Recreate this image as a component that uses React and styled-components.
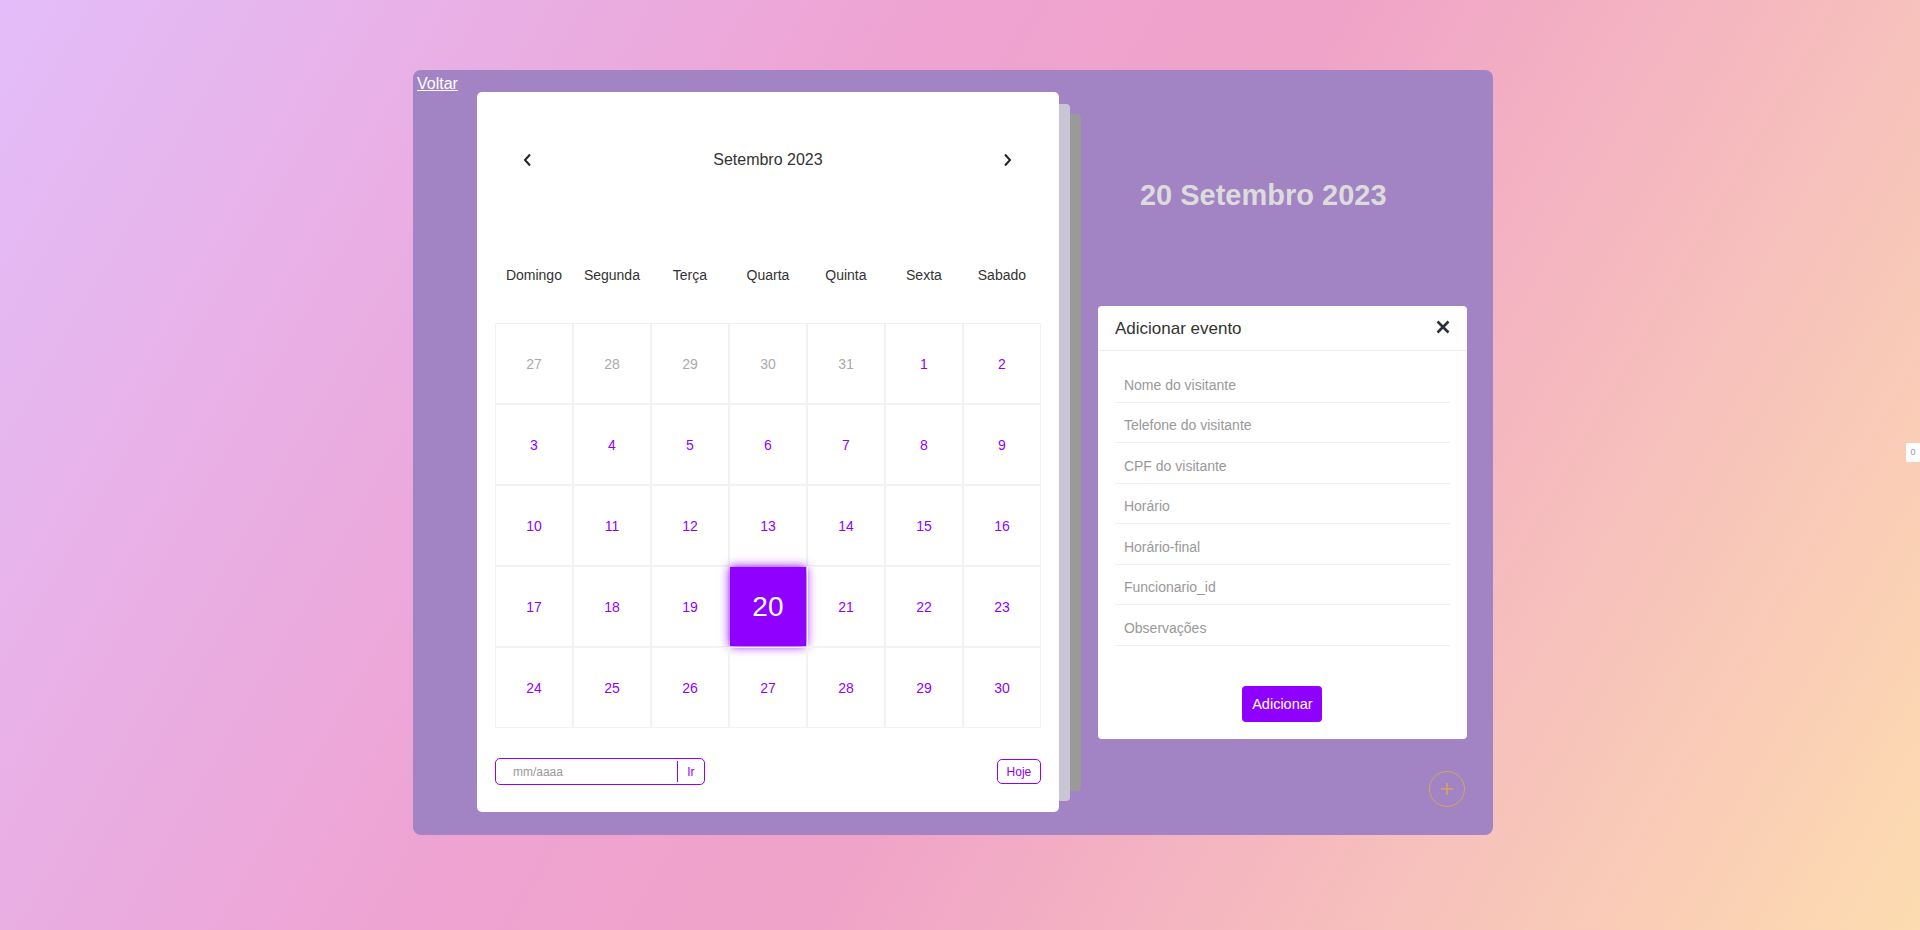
import React from 'react'
import styled, { createGlobalStyle } from 'styled-components'

const weekDays = ['Domingo', 'Segunda', 'Terça', 'Quarta', 'Quinta', 'Sexta', 'Sabado']
const fields = [
  'Nome do visitante',
  'Telefone do visitante',
  'CPF do visitante',
  'Horário',
  'Horário-final',
  'Funcionario_id',
  'Observações',
]

// setembro 2023 comeca numa sexta, mostra o fim de agosto antes
const days = [
  ...[27, 28, 29, 30, 31].map(d => ({ day: d, other: true })),
  ...Array.from({ length: 30 }, (_, i) => ({ day: i + 1, other: false })),
]

const GlobalStyle = createGlobalStyle`
  html, body {
    margin: 0;
    padding: 0;
  }
  body {
    min-height: 100vh;
    font-family: "Liberation Sans", Arial, sans-serif;
    background: linear-gradient(120deg, #e3bdf9 0%, #eea3d2 38%, #f0a3c8 55%, #fddcb0 100%);
    background-attachment: fixed;
  }
`

const Page = styled.div`
  height: 930px;
  padding: 70px 0 0 413px;
  box-sizing: border-box;
  display: flex;
`

const Container = styled.div`
  width: 1080px;
  height: 765px;
  background: #a283c4;
  border-radius: 8px;
  display: flex;
  align-items: flex-start;
`

const BackLink = styled.a`
  margin: 5px 0 0 4px;
  color: #fff;
  font-size: 16px;
  line-height: 18px;
  text-decoration: underline;
  cursor: pointer;
`

const CalendarStack = styled.div`
  position: relative;
  margin: 22px 0 0 19px;
  width: 582px;
  flex-shrink: 0;

  &::before,
  &::after {
    content: "";
    position: absolute;
    left: 40px;
    border-radius: 4px;
  }
  &::before {
    top: 12px;
    bottom: 11px;
    right: -11px;
    background: #c9c5d5;
    z-index: 1;
  }
  &::after {
    top: 22px;
    bottom: 21px;
    right: -22px;
    background: #9a9a9a;
    z-index: 0;
  }
`

const Card = styled.div`
  position: relative;
  z-index: 2;
  background: #fff;
  border-radius: 5px;
  height: 720px;
  box-sizing: border-box;
  padding: 48px 18px 27px;
`

const MonthHeader = styled.div`
  height: 40px;
  display: flex;
  align-items: center;
  justify-content: space-between;
  padding: 0 28px;
`

const Arrow = styled.button`
  border: 0;
  background: none;
  padding: 0;
  width: 10px;
  height: 14px;
  display: flex;
  align-items: center;
  justify-content: center;
  cursor: pointer;
`

const MonthTitle = styled.div`
  font-size: 16px;
  color: #333;
`

const WeekRow = styled.div`
  margin-top: 85px;
  display: grid;
  grid-template-columns: repeat(7, 78px);
  height: 20px;
  align-items: center;
`

const WeekDay = styled.div`
  text-align: center;
  font-size: 14px;
  color: #333;
`

const DayGrid = styled.div`
  margin-top: 38px;
  display: grid;
  grid-template-columns: repeat(7, 78px);
  grid-auto-rows: 81px;
`

const DayCell = styled.div`
  box-sizing: border-box;
  border: 1px solid #f2f2f2;
  display: flex;
  align-items: center;
  justify-content: center;
  font-size: 14px;
  color: ${props => (props.other ? '#aaa' : '#8f00ff')};
  cursor: pointer;
`

const Selected = styled.div`
  width: 100%;
  height: 100%;
  display: flex;
  align-items: center;
  justify-content: center;
  background: #8f00ff;
  color: #fff;
  font-size: 28px;
  box-shadow: 0 0 10px #8f00ff;
`

const Controls = styled.div`
  margin-top: 30px;
  display: flex;
  justify-content: space-between;
  align-items: center;
`

const GoBox = styled.div`
  width: 210px;
  height: 27px;
  box-sizing: border-box;
  border: 1px solid #8f00ff;
  border-radius: 5px;
  display: flex;
  align-items: stretch;
`

const MonthInput = styled.input`
  flex: 1;
  min-width: 0;
  border: 0;
  outline: none;
  background: transparent;
  padding: 0 0 0 17px;
  font-family: inherit;
  font-size: 12px;
  color: #333;
  &::placeholder {
    color: #999;
  }
`

const GoButton = styled.button`
  width: 27px;
  margin: 2px 0;
  border: 0;
  border-left: 1px solid #8f00ff;
  background: none;
  padding: 0;
  text-align: center;
  font-family: inherit;
  font-size: 12px;
  color: #8f00ff;
  cursor: pointer;
`

const TodayButton = styled.button`
  width: 44px;
  height: 25px;
  box-sizing: border-box;
  border: 1px solid #8f00ff;
  border-radius: 5px;
  background: #fff;
  padding: 0;
  font-family: inherit;
  font-size: 12px;
  color: #8f00ff;
  cursor: pointer;
`

const Side = styled.div`
  flex: 1;
  padding: 0 26px 0 39px;
  display: flex;
  flex-direction: column;
`

const BigDate = styled.h1`
  margin: 108px 0 0 42px;
  font-size: 29px;
  line-height: 34px;
  font-weight: bold;
  color: #dcdcdc;
`

const Modal = styled.div`
  margin-top: 94px;
  width: 369px;
  background: #fff;
  border-radius: 4px;
`

const ModalHeader = styled.div`
  height: 44px;
  border-bottom: 1px solid #eee;
  padding: 0 17px;
  display: flex;
  align-items: center;
  justify-content: space-between;
`

const ModalTitle = styled.div`
  font-size: 17px;
  color: #333;
  margin-top: 2px;
`

const CloseButton = styled.button`
  border: 0;
  background: none;
  padding: 0;
  display: flex;
  cursor: pointer;
  margin-top: -2px;
`

const ModalBody = styled.div`
  padding: 11px 17px 17px;
  display: flex;
  flex-direction: column;
`

const Field = styled.input`
  height: 40.5px;
  box-sizing: border-box;
  border: 0;
  border-bottom: 1px solid #eee;
  outline: none;
  padding: 6px 0 0 9px;
  font-family: inherit;
  font-size: 14px;
  color: #333;
  &::placeholder {
    color: #999;
  }
`

const AddButton = styled.button`
  align-self: center;
  margin-top: 40px;
  width: 80px;
  height: 36px;
  border: 0;
  border-radius: 4px;
  background: #8f00ff;
  color: #fff;
  font-family: inherit;
  font-size: 14.5px;
  cursor: pointer;
`

const PlusButton = styled.button`
  align-self: flex-end;
  margin: 32px 2px 0 0;
  width: 36px;
  height: 36px;
  border-radius: 50%;
  border: 1px solid #d4a75a;
  background: none;
  padding: 0;
  display: flex;
  align-items: center;
  justify-content: center;
  cursor: pointer;
`

const Counter = styled.div`
  position: fixed;
  right: 0;
  top: 443px;
  width: 14px;
  height: 19px;
  background: #fff;
  border-radius: 2px 0 0 2px;
  font-size: 9px;
  line-height: 19px;
  text-align: center;
  color: #999;
`

const Chevron = ({ dir }) => (
  <svg width="9" height="14" viewBox="0 0 9 14" fill="none">
    <path
      d={dir === 'left' ? 'M7 1.5 L2 7 L7 12.5' : 'M2 1.5 L7 7 L2 12.5'}
      stroke="#222"
      strokeWidth="2"
    />
  </svg>
)

export default function App() {
  return (
    <>
      <GlobalStyle />
      <Page>
        <Container>
          <BackLink>Voltar</BackLink>
          <CalendarStack>
            <Card>
              <MonthHeader>
                <Arrow><Chevron dir="left" /></Arrow>
                <MonthTitle>Setembro 2023</MonthTitle>
                <Arrow><Chevron dir="right" /></Arrow>
              </MonthHeader>
              <WeekRow>
                {weekDays.map(d => <WeekDay key={d}>{d}</WeekDay>)}
              </WeekRow>
              <DayGrid>
                {days.map((d, i) => (
                  <DayCell key={i} other={d.other}>
                    {!d.other && d.day === 20 ? <Selected>20</Selected> : d.day}
                  </DayCell>
                ))}
              </DayGrid>
              <Controls>
                <GoBox>
                  <MonthInput placeholder="mm/aaaa" />
                  <GoButton>Ir</GoButton>
                </GoBox>
                <TodayButton>Hoje</TodayButton>
              </Controls>
            </Card>
          </CalendarStack>
          <Side>
            <BigDate>20 Setembro 2023</BigDate>
            <Modal>
              <ModalHeader>
                <ModalTitle>Adicionar evento</ModalTitle>
                <CloseButton>
                  <svg width="14" height="14" viewBox="0 0 14 14">
                    <path d="M1.5 1.5 L12.5 12.5 M12.5 1.5 L1.5 12.5" stroke="#2b2f38" strokeWidth="2.6" />
                  </svg>
                </CloseButton>
              </ModalHeader>
              <ModalBody>
                {fields.map(f => <Field key={f} placeholder={f} />)}
                <AddButton>Adicionar</AddButton>
              </ModalBody>
            </Modal>
            <PlusButton>
              <svg width="14" height="14" viewBox="0 0 14 14">
                <path d="M7 1 V13 M1 7 H13" stroke="#d4a75a" strokeWidth="1.6" />
              </svg>
            </PlusButton>
          </Side>
        </Container>
      </Page>
      <Counter>0</Counter>
    </>
  )
}
